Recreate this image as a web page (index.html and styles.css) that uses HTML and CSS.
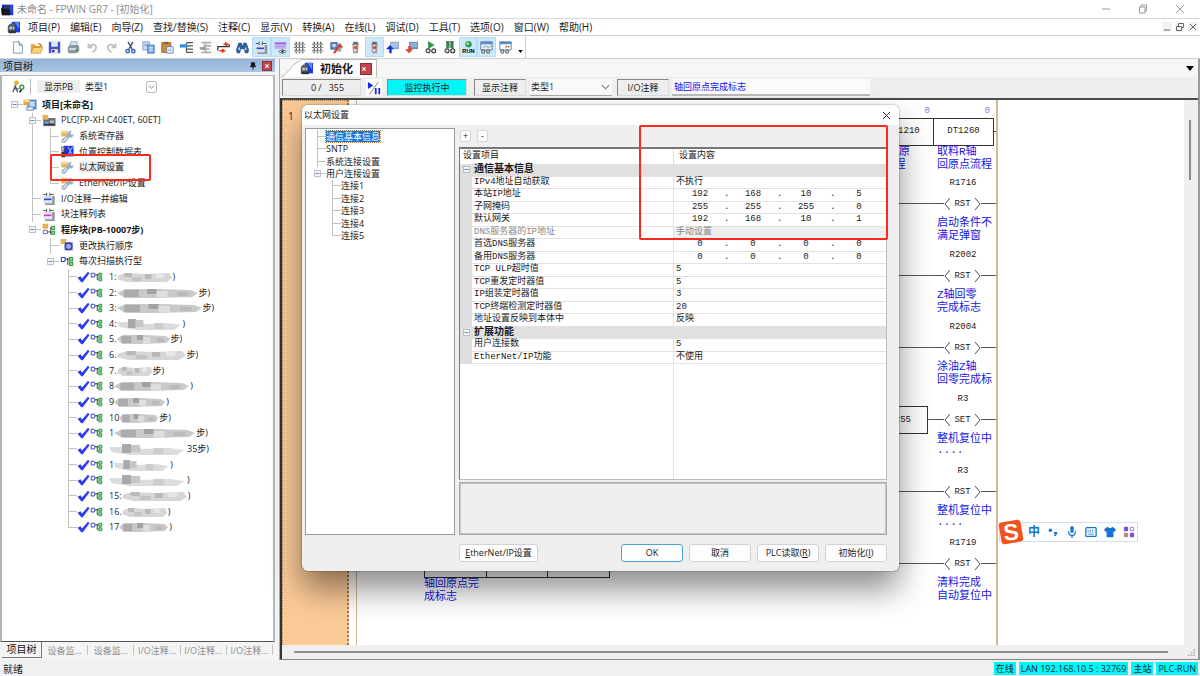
FILE: index.html
```html
<!DOCTYPE html>
<html lang="zh-CN">
<head>
<meta charset="utf-8">
<title>未命名 - FPWIN GR7 - [初始化]</title>
<link rel="stylesheet" href="styles.css">
</head>
<body>
<svg class="defs" aria-hidden="true">
  <symbol id="app" viewBox="0 0 16 16"><path d="M1 2h14v13H1z" fill="#1730e0"/><path d="M0 7l4-3h6l1 11H1z" fill="#15181c"/><path d="M4 4h6v3H3z" fill="#3b4048"/><path d="M11 3l3 1v9l-3-6z" fill="#2b56f5"/></symbol>
  <symbol id="plcdoc" viewBox="0 0 16 16"><path d="M6 1h10v13H6z" fill="#1a35ea"/><path d="M9 1l6 9V1z" fill="#5b86ff"/><path d="M1 6l3-3h6v11H1z" fill="#555b66"/><path d="M3 7h3v3H3zM7 7h2v3H7z" fill="#c9d2dc"/><path d="M2 12h9v3H2z" fill="#30353d"/></symbol>
  <symbol id="new" viewBox="0 0 16 16"><path d="M3 1h7l4 4v10H3z" fill="#fafdff" stroke="#6b8cae"/><path d="M10 1v4h4" fill="#cfe0f2" stroke="#3e6a9a"/></symbol>
  <symbol id="open" viewBox="0 0 16 16"><path d="M1 4h5l1 2h6v8H1z" fill="#e8a33a"/><path d="M4 8h12l-3 7H1z" fill="#fbd27a" stroke="#c27a1c" stroke-width=".7"/><path d="M9 3q4-2 5 2l1-1v3h-3l1-1q-1-2-4-3z" fill="#e07a20"/></symbol>
  <symbol id="save" viewBox="0 0 16 16"><path d="M1 1h14v14H1z" fill="#4453c4"/><path d="M4 1h8v6H4z" fill="#dfe8ff"/><path d="M4 10h8v5H4z" fill="#e8ecf8"/><path d="M5 11h3v3H5z" fill="#2a2f80"/></symbol>
  <symbol id="print" viewBox="0 0 16 16"><path d="M5 1h8l-2 6H3z" fill="#d5e6fa" stroke="#6c8db0" stroke-width=".8"/><path d="M1 7l3-2h10l1 2v5l-3 3H2l-1-2z" fill="#8a96a0"/><path d="M3 9h8v2H3z" fill="#e9eef2"/><path d="M11 10h3v3h-3z" fill="#43a047"/></symbol>
  <symbol id="undo" viewBox="0 0 16 16"><path d="M3 3v5h5M3 8q6-6 9-2 2 4-4 8" fill="none" stroke="#b9bcc0" stroke-width="2"/></symbol>
  <symbol id="redo" viewBox="0 0 16 16"><path d="M13 3v5H8M13 8Q7 2 4 6q-2 4 4 8" fill="none" stroke="#b9bcc0" stroke-width="2"/></symbol>
  <symbol id="cut" viewBox="0 0 16 16"><path d="M5 1l5 9M11 1L6 10" stroke="#4a5a70" stroke-width="1.8"/><circle cx="4.500" cy="12.500" r="2" fill="none" stroke="#2f66b8" stroke-width="1.800"/><circle cx="11.500" cy="12.500" r="2" fill="none" stroke="#2f66b8" stroke-width="1.800"/></symbol>
  <symbol id="copy" viewBox="0 0 16 16"><path d="M1 1h8v10H1z" fill="#cfe2fa" stroke="#6a8fc4"/><path d="M3 4h4M3 6h4" stroke="#6a8fc4"/><path d="M7 5h8v10H7z" fill="#7db0ea" stroke="#3c69a8"/><path d="M9 8h4M9 10h4M9 12h4" stroke="#e6f1ff"/></symbol>
  <symbol id="paste" viewBox="0 0 16 16"><path d="M1 2h11v12H1z" fill="#d08a3a" stroke="#8c5417"/><path d="M4 1h5v3H4z" fill="#6b6b6b"/><path d="M7 7h8v8H7z" fill="#eef4fc" stroke="#5b7ba8"/><path d="M9 10h4M9 12h4" stroke="#8aa4c8"/></symbol>
  <symbol id="insrow" viewBox="0 0 16 16"><path d="M8 2h8M8 6h8M8 10h8M8 14h8M8 2v12" stroke="#555" stroke-width="1.500" fill="none"/><path d="M0 4h7v4H0z" fill="#2d8be0"/><path d="M7 3l3 3-3 3z" fill="#2d8be0"/></symbol>
  <symbol id="delrow" viewBox="0 0 16 16"><path d="M3 2h12M5 6h10M3 10h10M3 14h12M8 2v12" stroke="#b0b0b0" stroke-width="2"/><path d="M1 9h7" stroke="#999" stroke-width="3"/></symbol>
  <symbol id="wire" viewBox="0 0 16 16"><path d="M1 12V7h14V4" fill="none" stroke="#333" stroke-width="1.500"/><path d="M10 1l5 3-5 3zM6 9l5 3-5 3z" fill="#e33b16"/><path d="M8 4h3M3 12h4" stroke="#e33b16" stroke-width="2"/></symbol>
  <symbol id="find" viewBox="0 0 16 16"><path d="M3 2h4l1 4 1-4h4l3 9-1 4h-4l-1-5H6l-1 5H1l-1-4z" fill="#2e5f9c"/><path d="M3 8h2v3H3zM11 8h2v3h-2z" fill="#b8d4f4"/></symbol>
  <symbol id="iocmt" viewBox="0 0 16 16"><path d="M3 5h12v11H3z" fill="#8c949e"/><path d="M1 5h11v9H1z" fill="#dbe2ea"/><path d="M1 3h3M5 1v4M9 1v4M10 3h4" stroke="#555" stroke-width="1.300"/><path d="M2 9h9" stroke="#1c49e8" stroke-width="2"/></symbol>
  <symbol id="blkcmt" viewBox="0 0 16 16"><path d="M3 5h12v11H3z" fill="#8c949e"/><path d="M1 5h11v9H1z" fill="#e6e6ee"/><path d="M1 3h3M5 1v4M9 1v4M10 3h4" stroke="#555" stroke-width="1.300"/><path d="M2 9h9" stroke="#e62bd8" stroke-width="2"/></symbol>
  <symbol id="cmtview" viewBox="0 0 16 16"><path d="M1 1h14v9H1z" fill="#c9b4f4"/><path d="M1 3h14" stroke="#a05be8" stroke-width="2"/><path d="M1 7h14" stroke="#8f9be0"/><path d="M6 13q4-4 9 0-4 4-9 0z" fill="#fff" stroke="#444"/><circle cx="10.500" cy="13" r="1.500" fill="#333"/></symbol>
  <symbol id="grid" viewBox="0 0 16 16"><path d="M1 4h14M1 8h14M1 12h14" stroke="#777" stroke-width="1.500" stroke-dasharray="3 1"/><path d="M4 1v14M8 1v14M12 1v14" stroke="#666" stroke-width="1.800" stroke-dasharray="3 1"/></symbol>
  <symbol id="conv" viewBox="0 0 16 16"><path d="M1 2h8v8H1z" fill="#5f91d8" stroke="#2f4f88"/><path d="M3 4h4v3H3z" fill="#d8e8fb"/><path d="M9 3h5v10H9z" fill="#9aa5b5"/><path d="M5 15L12 5l3 3" stroke="#d83b28" stroke-width="2.500" fill="none"/></symbol>
  <symbol id="plc" viewBox="0 0 16 16"><path d="M4 3h8l-1 12H5z" fill="#9b9b9b"/><path d="M5 1h6v3H5z" fill="#6c6c6c"/><path d="M6 5h3v8H6z" fill="#e2e2e2"/><circle cx="8" cy="8" r="2" fill="#d9452c"/></symbol>
  <symbol id="upload" viewBox="0 0 16 16"><path d="M5 1h11v9H5z" fill="#8fa4bd"/><path d="M6 2h9v6H6z" fill="#a9c4e6"/><path d="M5 5l5 5H7v5H4v-5H0z" fill="#1b31e6"/></symbol>
  <symbol id="download" viewBox="0 0 16 16"><path d="M5 1h11v9H5z" fill="#6f86a0"/><path d="M6 2h9v6H6z" fill="#8fb0d8"/><path d="M5 15l5-5H7V6H4v4H0z" fill="#e2412a"/></symbol>
  <symbol id="monrun" viewBox="0 0 16 16"><path d="M5 0l8 5-8 5z" fill="#2f9a48"/><circle cx="5" cy="12" r="2.500" fill="#ddd" stroke="#333" stroke-width="1.300"/><circle cx="12" cy="12" r="2.500" fill="#ddd" stroke="#333" stroke-width="1.300"/></symbol>
  <symbol id="monstop" viewBox="0 0 16 16"><path d="M4 0h4v9H4zM9 0h4v9H9z" fill="#3b7d4c"/><circle cx="5" cy="12" r="2.500" fill="#ddd" stroke="#333" stroke-width="1.300"/><circle cx="12" cy="12" r="2.500" fill="#ddd" stroke="#333" stroke-width="1.300"/></symbol>
  <symbol id="monwin" viewBox="0 0 16 16"><path d="M1 1h14v10H1z" fill="#e4ecf7" stroke="#4f6f9a"/><path d="M1 1h14v3H1z" fill="#5a88c8"/><path d="M4 8l3-2 3 2 4-2" stroke="#4a7" fill="none"/><circle cx="4" cy="13" r="2" fill="#ddd" stroke="#333"/><circle cx="10" cy="13" r="2" fill="#ddd" stroke="#333"/></symbol>
  <symbol id="monwin2" viewBox="0 0 16 16"><path d="M1 1h14v10H1z" fill="#fff" stroke="#4f6f9a"/><path d="M1 1h14v3H1z" fill="#5a88c8"/><path d="M8 6h2v2H8z" fill="#d43"/><path d="M11 6h2v2h-2z" fill="#3a5"/><circle cx="4" cy="13" r="2" fill="#ddd" stroke="#333"/><circle cx="10" cy="13" r="2" fill="#ddd" stroke="#333"/></symbol>
  <symbol id="tool" viewBox="0 0 16 16"><path d="M1 1h8v7H1z" fill="#e8b254"/><path d="M2 1h6v3H2z" fill="#f7db9d"/><path d="M2 15q-2-2 0-4l7-5q0-5 5-5l-2 3 2 2 2-1q0 5-5 4l-5 6q-2 2-4 0z" fill="#93aecb"/><path d="M3 14l5-5" stroke="#d4e6f6" stroke-width="2"/></symbol>
  <symbol id="pos" viewBox="0 0 16 16"><path d="M4 1h12v13H4z" fill="#1b2be8"/><path d="M9 2l3 5-3 7M15 2l-3 5 3 7" stroke="#8fb4ff" stroke-width="1.500" fill="none"/><path d="M1 8h5v7H1z" fill="#3a3340"/><path d="M1 2h5v5H1z" fill="#55505c"/><path d="M2 3h2v3H2z" fill="#d8d8d8"/></symbol>
  <symbol id="project" viewBox="0 0 16 16"><path d="M5 2h11v12H5z" fill="#4c84c8"/><path d="M7 4h7v7H7z" fill="#b9dcfa"/><path d="M0 2h8v7H0z" fill="#e0a64a"/><path d="M1 2h6v3H1z" fill="#f9dda0"/><path d="M4 11h8v4H4z" fill="#e9f2fb" stroke="#4977ad"/></symbol>
  <symbol id="plcunit" viewBox="0 0 16 16"><path d="M1 5h15v10H1z" fill="#666d78"/><path d="M0 1h7v6H0z" fill="#e8b254"/><path d="M3 9h4v3H3z" fill="#4fa7e8"/><path d="M9 8h5v3H9z" fill="#b8c0ca"/><path d="M2 13h13" stroke="#222"/></symbol>
  <symbol id="blocks" viewBox="0 0 16 16"><path d="M0 1h7v6H0z" fill="#e8b254"/><path d="M1 9h5v4H1z" fill="#fff" stroke="#3b50b8"/><path d="M6 11h4M10 5v9" stroke="#333"/><path d="M11 4h4v4h-4zM11 10h4v4h-4z" fill="#7fd08a" stroke="#2a8a3a"/></symbol>
  <symbol id="order" viewBox="0 0 16 16"><path d="M0 0h7v6H0z" fill="#e8b254"/><path d="M5 4h10v10H5z" fill="#5a69c8"/><circle cx="10" cy="9" r="4" fill="#9aa5ea" stroke="#2e3b98" stroke-width="1.500"/></symbol>
  <symbol id="pb" viewBox="0 0 16 16"><path d="M1 3h4q2 2 0 5H1z" fill="#fff" stroke="#3445c8" stroke-width="1.300"/><path d="M6 5h4M9 4v8" stroke="#333" stroke-width="1.200"/><path d="M11 3h4v4h-4zM11 9h4v4h-4z" fill="#8fd89a" stroke="#2f9a40" stroke-width="1.300"/></symbol>
  <symbol id="check" viewBox="0 0 16 16"><path d="M0 9l4-2 2 3 8-9 2 2L7 15H5z" fill="#2d3df0"/></symbol>
  <symbol id="people" viewBox="0 0 16 16"><path d="M5 0l4 3-3 4-4-3z" fill="#f0b030"/><path d="M1 15l3-8 3 8M3 11h5" fill="none" stroke="#4a5570" stroke-width="1.500"/><circle cx="12" cy="9" r="2.500" fill="none" stroke="#3a9a48" stroke-width="1.800"/><path d="M9 15l3-3" stroke="#26324f" stroke-width="2"/></symbol>
  <symbol id="down" viewBox="0 0 10 10"><path d="M1 3l4 4 4-4" fill="none" stroke="#777" stroke-width="1.200"/></symbol>
  <symbol id="minus" viewBox="0 0 9 9"><path d="M.5.5h8v8h-8z" fill="#f4f6fa" stroke="#a3a9b0"/><path d="M2 4.500h5" stroke="#4a68b8"/></symbol>
  <symbol id="lt" viewBox="0 0 6 14"><path d="M6 1L1 7l5 6" fill="none" stroke="#444"/></symbol>
  <symbol id="gt" viewBox="0 0 6 14"><path d="M0 1l5 6-5 6" fill="none" stroke="#444"/></symbol>
  <symbol id="mosA" viewBox="0 0 60 12" preserveAspectRatio="none"><path d="M2 4l8-2 20 1 26-1 3 5-6 4H10L0 8z" fill="#d6d6d6"/><path d="M8 2h8v4H8zM30 3h7v5h-7z" fill="#b9b9b9"/><path d="M16 6h10v4H16z" fill="#c4c4c4"/><path d="M42 3h8v4h-8z" fill="#e6e6e6"/></symbol>
  <symbol id="mosB" viewBox="0 0 60 12" preserveAspectRatio="none"><path d="M0 6l6-4h24l24 1 5 3-4 4-30 1H6z" fill="#c9c9c9"/><path d="M5 3h11v7H5z" fill="#acacac"/><path d="M22 2h7v5h-7z" fill="#a2a2a2"/><path d="M29 4h8v6h-8z" fill="#dedede"/><path d="M44 5h8v4h-8z" fill="#bababa"/></symbol>
  <symbol id="mosC" viewBox="0 0 60 12" preserveAspectRatio="none"><path d="M0 4h20l6 2 20-1 12 2-6 5H16L2 9z" fill="#dcdcdc"/><path d="M10 1h7v9h-7z" fill="#a9a9a9"/><path d="M17 2h7v7h-7z" fill="#c6c6c6"/><path d="M34 5h8v6h-8z" fill="#cdcdcd"/></symbol>
</svg>

<div class="app">
  <header class="titlebar">
    <svg class="i14"><use href="#app"/></svg>
    <h1>未命名 - FPWIN GR7 - [初始化]</h1>
    <div class="wincontrols">
      <button aria-label="最小化"><svg viewBox="0 0 10 10"><path d="M1 5h8"/></svg></button>
      <button aria-label="还原"><svg viewBox="0 0 10 10"><path d="M1.500 3h5.500v6H1.500zM3 3V1h5.500v6H7" /></svg></button>
      <button aria-label="关闭"><svg viewBox="0 0 10 10"><path d="M1 1l8 8M9 1L1 9"/></svg></button>
    </div>
  </header>

  <nav class="menubar">
    <svg class="i14"><use href="#plcdoc"/></svg>
    <button>项目(P)</button><button>编辑(E)</button><button>向导(Z)</button><button>查找/替换(S)</button><button>注释(C)</button><button>显示(V)</button><button>转换(A)</button><button>在线(L)</button><button>调试(D)</button><button>工具(T)</button><button>选项(O)</button><button>窗口(W)</button><button>帮助(H)</button>
    <div class="mdi">
      <button aria-label="最小化文档"><svg viewBox="0 0 10 10"><path d="M2 8h6"/></svg></button>
      <button aria-label="还原文档"><svg viewBox="0 0 10 10"><path d="M1.500 4.500h5v4h-5zM3.500 4V1.500h5v4H7"/></svg></button>
      <button aria-label="关闭文档"><svg viewBox="0 0 10 10"><path d="M2 2l6 6M8 2L2 8"/></svg></button>
    </div>
  </nav>

  <div class="toolbar">
    <div class="tools">
      <button aria-label="新建"><svg><use href="#new"/></svg></button>
      <button aria-label="打开"><svg><use href="#open"/></svg></button>
      <button aria-label="保存"><svg><use href="#save"/></svg></button>
      <button aria-label="打印"><svg><use href="#print"/></svg></button>
      <button aria-label="撤销"><svg><use href="#undo"/></svg></button>
      <button aria-label="重做"><svg><use href="#redo"/></svg></button>
      <button aria-label="剪切"><svg><use href="#cut"/></svg></button>
      <button aria-label="复制"><svg><use href="#copy"/></svg></button>
      <button aria-label="粘贴"><svg><use href="#paste"/></svg></button>
      <button aria-label="插入行"><svg><use href="#insrow"/></svg></button>
      <button aria-label="删除行"><svg><use href="#delrow"/></svg></button>
      <button aria-label="连线"><svg><use href="#wire"/></svg></button>
      <button aria-label="查找"><svg><use href="#find"/></svg></button>
      <button class="on" aria-label="I/O注释"><svg><use href="#iocmt"/></svg></button>
      <button class="on" aria-label="显示注释"><svg><use href="#cmtview"/></svg></button>
      <button aria-label="网格"><svg><use href="#grid"/></svg></button>
      <button aria-label="网格转换"><svg><use href="#grid"/></svg></button>
      <button aria-label="转换"><svg><use href="#conv"/></svg></button>
      <button aria-label="离线"><svg><use href="#plc"/></svg></button>
      <button class="on" aria-label="在线"><svg><use href="#plc"/></svg></button>
      <button aria-label="读取"><svg><use href="#upload"/></svg></button>
      <button aria-label="下载"><svg><use href="#download"/></svg></button>
      <button aria-label="开始监控"><svg><use href="#monrun"/></svg></button>
      <button aria-label="停止监控"><svg><use href="#monstop"/></svg></button>
      <button class="on" aria-label="运行"><svg viewBox="0 0 16 16"><circle cx="8" cy="4" r="4" fill="#2fa050"/><circle cx="7" cy="3" r="1.500" fill="#b5ebc3"/><text x="8" y="15" text-anchor="middle" font-size="7" font-weight="700" font-family="Liberation Sans">RUN</text></svg></button>
      <button class="on" aria-label="数据监控"><svg><use href="#monwin"/></svg></button>
      <button aria-label="状态监控"><svg><use href="#monwin2"/></svg></button>
    </div>
    <button class="more" aria-label="更多"><svg viewBox="0 0 6 4"><path d="M0 0h6L3 4z"/></svg></button>
  </div>

  <main class="work">
    <aside class="dock">
      <header class="dockhead">
        <h2>项目树</h2>
        <button class="pin" aria-label="固定"><svg viewBox="0 0 10 10"><path d="M3 1h4v4h1v1H2V5h1zM5 6v4" fill="#111" stroke="#111"/></svg></button>
        <button class="redx" aria-label="关闭项目树"><svg viewBox="0 0 10 10"><path d="M3 3l4 4M7 3L3 7" stroke="#fff" stroke-width="1.500"/></svg></button>
      </header>
      <div class="dockbody">
        <div class="filter">
          <svg class="i14"><use href="#people"/></svg>
          <span class="bar"></span>
          <button class="showpb">显示PB</button>
          <label class="pick"><select aria-label="类型"><option>类型1</option></select><svg><use href="#down"/></svg></label>
        </div>
        <ul class="tree">
          <li class="strong"><button class="tog end" aria-label="折叠"><svg><use href="#minus"/></svg></button><svg class="ico"><use href="#project"/></svg><span>项目[未命名]</span></li>
          <li class="l1"><button class="tog thru" aria-label="折叠"><svg><use href="#minus"/></svg></button><svg class="ico"><use href="#plcunit"/></svg><span>PLC[FP-XH C40ET, 60ET]</span></li>
          <li class="l1"><i class="v"></i><i class="t"></i><svg class="ico"><use href="#tool"/></svg><span>系统寄存器</span></li>
          <li class="l1"><i class="v"></i><i class="t"></i><svg class="ico"><use href="#pos"/></svg><span>位置控制数据表</span></li>
          <li class="l1 current"><i class="v"></i><i class="t"></i><svg class="ico"><use href="#tool"/></svg><span>以太网设置</span><b class="mark"></b></li>
          <li class="l1"><i class="v"></i><i class="e"></i><svg class="ico"><use href="#tool"/></svg><span>EtherNet/IP设置</span></li>
          <li class="l1"><i class="t"></i><svg class="ico"><use href="#iocmt"/></svg><span>I/O注释一并编辑</span></li>
          <li class="l1"><i class="t"></i><svg class="ico"><use href="#blkcmt"/></svg><span>块注释列表</span></li>
          <li class="l1 strong"><button class="tog end" aria-label="折叠"><svg><use href="#minus"/></svg></button><svg class="ico"><use href="#blocks"/></svg><span>程序块(PB-10007步)</span></li>
          <li class="l2"><i class="t"></i><svg class="ico"><use href="#order"/></svg><span>更改执行顺序</span></li>
          <li class="l2"><button class="tog end" aria-label="折叠"><svg><use href="#minus"/></svg></button><svg class="ico"><use href="#pb"/></svg><span>每次扫描执行型</span></li>
          <li class="l3"><i class="t"></i><svg class="chk"><use href="#check"/></svg><svg class="pbi"><use href="#pb"/></svg><span>1:</span><svg class="mos" style="width:56px"><use href="#mosA"/></svg><span>)</span></li>
          <li class="l3"><i class="t"></i><svg class="chk"><use href="#check"/></svg><svg class="pbi"><use href="#pb"/></svg><span>2:</span><svg class="mos" style="width:82px"><use href="#mosB"/></svg><span>步)</span></li>
          <li class="l3"><i class="t"></i><svg class="chk"><use href="#check"/></svg><svg class="pbi"><use href="#pb"/></svg><span>3:</span><svg class="mos" style="width:86px"><use href="#mosB"/></svg><span>步)</span></li>
          <li class="l3"><i class="t"></i><svg class="chk"><use href="#check"/></svg><svg class="pbi"><use href="#pb"/></svg><span>4:</span><svg class="mos" style="width:66px"><use href="#mosC"/></svg><span>)</span></li>
          <li class="l3"><i class="t"></i><svg class="chk"><use href="#check"/></svg><svg class="pbi"><use href="#pb"/></svg><span>5.</span><svg class="mos" style="width:54px"><use href="#mosB"/></svg><span>步)</span></li>
          <li class="l3"><i class="t"></i><svg class="chk"><use href="#check"/></svg><svg class="pbi"><use href="#pb"/></svg><span>6.</span><svg class="mos" style="width:70px"><use href="#mosA"/></svg><span>步)</span></li>
          <li class="l3"><i class="t"></i><svg class="chk"><use href="#check"/></svg><svg class="pbi"><use href="#pb"/></svg><span>7.</span><svg class="mos" style="width:36px"><use href="#mosA"/></svg><span>步)</span></li>
          <li class="l3"><i class="t"></i><svg class="chk"><use href="#check"/></svg><svg class="pbi"><use href="#pb"/></svg><span>8</span><svg class="mos" style="width:76px"><use href="#mosB"/></svg><span>)</span></li>
          <li class="l3"><i class="t"></i><svg class="chk"><use href="#check"/></svg><svg class="pbi"><use href="#pb"/></svg><span>9</span><svg class="mos" style="width:52px"><use href="#mosB"/></svg><span>)</span></li>
          <li class="l3"><i class="t"></i><svg class="chk"><use href="#check"/></svg><svg class="pbi"><use href="#pb"/></svg><span>10</span><svg class="mos" style="width:40px"><use href="#mosB"/></svg><span>步)</span></li>
          <li class="l3"><i class="t"></i><svg class="chk"><use href="#check"/></svg><svg class="pbi"><use href="#pb"/></svg><span>1</span><svg class="mos" style="width:82px"><use href="#mosB"/></svg><span>步)</span></li>
          <li class="l3"><i class="t"></i><svg class="chk"><use href="#check"/></svg><svg class="pbi"><use href="#pb"/></svg><svg class="mos" style="width:78px"><use href="#mosC"/></svg><span>35步)</span></li>
          <li class="l3"><i class="t"></i><svg class="chk"><use href="#check"/></svg><svg class="pbi"><use href="#pb"/></svg><span>1</span><svg class="mos" style="width:56px"><use href="#mosC"/></svg><span>)</span></li>
          <li class="l3"><i class="t"></i><svg class="chk"><use href="#check"/></svg><svg class="pbi"><use href="#pb"/></svg><svg class="mos" style="width:78px"><use href="#mosC"/></svg><span>)</span></li>
          <li class="l3"><i class="t"></i><svg class="chk"><use href="#check"/></svg><svg class="pbi"><use href="#pb"/></svg><span>15:</span><svg class="mos" style="width:66px"><use href="#mosA"/></svg><span>)</span></li>
          <li class="l3"><i class="t"></i><svg class="chk"><use href="#check"/></svg><svg class="pbi"><use href="#pb"/></svg><span>16.</span><svg class="mos" style="width:46px"><use href="#mosA"/></svg><span>)</span></li>
          <li class="l3"><i class="e"></i><svg class="chk"><use href="#check"/></svg><svg class="pbi"><use href="#pb"/></svg><span>17</span><svg class="mos" style="width:50px"><use href="#mosB"/></svg><span>)</span></li>
        </ul>
      </div>
      <nav class="docktabs">
        <button class="active">项目树</button><button>设备监...</button><button>设备监...</button><button>I/O注释...</button><button>I/O注释...</button><button>I/O注释...</button>
      </nav>
    </aside>

    <section class="doc">
      <div class="tabstrip">
        <div class="tab">
          <svg class="slant" viewBox="0 0 20 18"><path d="M0 18Q4 17 8 11T20 1V18z" fill="#fff"/><path d="M0 18Q4 17 8 11T20 1" fill="none" stroke="#bbb"/></svg>
          <div class="tabface"><svg class="i14"><use href="#plcdoc"/></svg><span>初始化</span><button class="redx" aria-label="关闭初始化"><svg viewBox="0 0 10 10"><path d="M3 3l4 4M7 3L3 7" stroke="#fff" stroke-width="1.500"/></svg></button></div>
        </div>
        <button class="tablist" aria-label="窗口列表"><svg viewBox="0 0 8 5"><path d="M0 0h8L4 5z"/></svg></button>
      </div>
      <div class="infobar">
        <div class="sunk steps">0 /&nbsp;&nbsp; 355</div>
        <button class="pp" aria-label="监控切换"><svg viewBox="0 0 16 16"><path d="M1 1l6 4-6 4z" fill="#1522e8"/><path d="M3 15L13 1" stroke="#777"/><path d="M9 8h2v7H9zM13 8h2v7h-2z" fill="#1522e8"/></svg></button>
        <div class="sunk run">监控执行中</div>
        <div class="sunk show">显示注释</div>
        <label class="pick wide"><select aria-label="注释类型"><option>类型1</option></select><svg><use href="#down"/></svg></label>
        <label class="sunk io" for="iotext">I/O注释</label>
        <input id="iotext" value="轴回原点完成标志">
      </div>
      <div class="view">
        <div class="gutter">1</div>
        <div class="ladder">
          <div class="func">
            <div class="cell"><span>0</span><b>DT1210</b><p>轴回原<br>&nbsp;流程</p></div>
            <div class="cell"><span>0</span><b>DT1260</b><p>取料R轴<br>回原点流程</p></div>
            <i></i>
          </div>
          <div class="out"><h3>R1716</h3><div class="rung"><i></i><svg><use href="#lt"/></svg><b>RST</b><svg><use href="#gt"/></svg><i class="tail"></i></div><p>启动条件不<br>满足弹窗</p></div>
          <div class="out"><h3>R2002</h3><div class="rung"><i></i><svg><use href="#lt"/></svg><b>RST</b><svg><use href="#gt"/></svg><i class="tail"></i></div><p>Z轴回零<br>完成标志</p></div>
          <div class="out"><h3>R2004</h3><div class="rung"><i></i><svg><use href="#lt"/></svg><b>RST</b><svg><use href="#gt"/></svg><i class="tail"></i></div><p>涂油Z轴<br>回零完成标</p></div>
          <div class="out"><h3>R3</h3><div class="rung"><i></i><em>255</em><i class="lead"></i><svg><use href="#lt"/></svg><b>SET</b><svg><use href="#gt"/></svg><i class="tail"></i></div><p>整机复位中<br>····</p></div>
          <div class="out"><h3>R3</h3><div class="rung"><i></i><svg><use href="#lt"/></svg><b>RST</b><svg><use href="#gt"/></svg><i class="tail"></i></div><p>整机复位中<br>····</p></div>
          <div class="out"><h3>R1719</h3><div class="rung"><i></i><svg><use href="#lt"/></svg><b>RST</b><svg><use href="#gt"/></svg><i class="tail"></i></div><p>清料完成<br>自动复位中</p></div>
          <div class="lower"><div class="boxes"><i></i><i></i><i></i></div><p>轴回原点完<br>成标志</p></div>
        </div>
        <div class="blank"></div>
        <div class="vscroll"><i></i></div>
      </div>
      <div class="hscroll"><i></i><svg viewBox="0 0 8 8"><path d="M6 0h2v2H6zM3 3h2v2H3zM6 3h2v2H6zM0 6h2v2H0zM3 6h2v2H3zM6 6h2v2H6z" fill="#bbb"/></svg></div>

      <div class="ime">
        <svg class="sogou" viewBox="0 0 26 26"><rect x="2" y="2" width="22" height="22" rx="3" fill="#f4511e" transform="rotate(-10 13 13)"/><text x="13" y="21" text-anchor="middle" font-family="Liberation Sans" font-size="23" font-weight="700" fill="#fff" transform="rotate(-6 13 13)">S</text></svg>
        <span>中</span>
        <svg viewBox="0 0 14 14"><circle cx="4" cy="5" r="2"/><path d="M8 7h4q0 4-3 5l-1-1q2-1 1-2H8z"/></svg>
        <svg viewBox="0 0 14 14"><rect x="5" y="0" width="4" height="8" rx="2"/><path d="M3 6q0 5 4 5t4-5M7 11v3" fill="none" stroke="#1273d0" stroke-width="1.500"/></svg>
        <svg viewBox="0 0 14 14"><rect x="1" y="2" width="12" height="10" rx="1" fill="none" stroke="#1273d0" stroke-width="1.500"/><path d="M3 5h8M3 7h8" stroke="#1273d0" stroke-dasharray="1.500 1"/><path d="M4 9.500h6" stroke="#1273d0"/></svg>
        <svg viewBox="0 0 14 14"><path d="M4 1q3 3 6 0l4 3-2 3-1-1v7H3V6L2 7 0 4z"/></svg>
        <svg viewBox="0 0 14 14"><rect x="1" y="1" width="5" height="5" rx="1" fill="#7455d8"/><rect x="8.500" y="1.500" width="4" height="4" rx="1" fill="none" stroke="#7455d8"/><rect x="1" y="8" width="5" height="5" rx="1" fill="#c08a70"/><rect x="8" y="8" width="5" height="5" rx="1" fill="#7455d8"/></svg>
      </div>

      <div class="dialog" role="dialog" aria-labelledby="dlgtitle">
        <header><h2 id="dlgtitle">以太网设置</h2><button aria-label="关闭对话框"><svg viewBox="0 0 10 10"><path d="M1 1l8 8M9 1L1 9" stroke="#222"/></svg></button></header>
        <div class="dlgbody">
          <ul class="pages">
            <li class="sel"><i class="t"></i><span>通信基本信息</span></li>
            <li><i class="t"></i><span>SNTP</span></li>
            <li><i class="t"></i><span>系统连接设置</span></li>
            <li><button class="tog end" aria-label="折叠"><svg><use href="#minus"/></svg></button><span>用户连接设置</span></li>
            <li class="sub"><i class="t"></i><span>连接1</span></li>
            <li class="sub"><i class="t"></i><span>连接2</span></li>
            <li class="sub"><i class="t"></i><span>连接3</span></li>
            <li class="sub"><i class="t"></i><span>连接4</span></li>
            <li class="sub"><i class="e"></i><span>连接5</span></li>
          </ul>
          <div class="settings">
            <div class="pm"><button>+</button><button>-</button></div>
            <div class="gridpane">
              <table>
                <colgroup><col class="c0"><col class="c1"><col></colgroup>
                <thead><tr><th colspan="2">设置项目</th><th class="val">设置内容</th></tr></thead>
                <tbody>
                  <tr class="group"><td><svg><use href="#minus"/></svg></td><td colspan="2">通信基本信息</td></tr>
                  <tr><td></td><td>IPv4地址自动获取</td><td>不执行</td></tr>
                  <tr><td></td><td>本站IP地址</td><td><div class="ip"><span>192</span><i>.</i><span>168</span><i>.</i><span>10</span><i>.</i><span>5</span></div></td></tr>
                  <tr><td></td><td>子网掩码</td><td><div class="ip"><span>255</span><i>.</i><span>255</span><i>.</i><span>255</span><i>.</i><span>0</span></div></td></tr>
                  <tr><td></td><td>默认网关</td><td><div class="ip"><span>192</span><i>.</i><span>168</span><i>.</i><span>10</span><i>.</i><span>1</span></div></td></tr>
                  <tr class="off"><td></td><td>DNS服务器的IP地址</td><td>手动设置</td></tr>
                  <tr><td></td><td>首选DNS服务器</td><td><div class="ip"><span>0</span><i>.</i><span>0</span><i>.</i><span>0</span><i>.</i><span>0</span></div></td></tr>
                  <tr><td></td><td>备用DNS服务器</td><td><div class="ip"><span>0</span><i>.</i><span>0</span><i>.</i><span>0</span><i>.</i><span>0</span></div></td></tr>
                  <tr><td></td><td>TCP ULP超时值</td><td>5</td></tr>
                  <tr><td></td><td>TCP重发定时器值</td><td>5</td></tr>
                  <tr><td></td><td>IP组装定时器值</td><td>3</td></tr>
                  <tr><td></td><td>TCP终端检测定时器值</td><td>20</td></tr>
                  <tr><td></td><td>地址设置反映到本体中</td><td>反映</td></tr>
                  <tr class="group"><td><svg><use href="#minus"/></svg></td><td colspan="2">扩展功能</td></tr>
                  <tr><td></td><td>用户连接数</td><td>5</td></tr>
                  <tr><td></td><td>EtherNet/IP功能</td><td>不使用</td></tr>
                </tbody>
              </table>
            </div>
            <div class="desc"></div>
            <b class="mark"></b>
          </div>
        </div>
        <footer>
          <button class="eth"><u>E</u>therNet/IP设置</button>
          <button class="ok">OK</button>
          <button>取消</button>
          <button>PLC读取(<u>R</u>)</button>
          <button>初始化(<u>I</u>)</button>
        </footer>
      </div>
    </section>
  </main>

  <footer class="status">
    <span>就绪</span>
    <b class="first">在线</b><b>LAN 192.168.10.5 : 32769</b><b>主站</b><b>PLC-RUN</b>
  </footer>
</div>
</body>
</html>
```
FILE: styles.css
```css
* { box-sizing: border-box; margin: 0; padding: 0; }
:root {
  --ui: "Open Sans", "Noto Sans CJK SC", sans-serif;
  --song: "Liberation Mono", "Noto Sans CJK SC", monospace;
  --dots: linear-gradient(#c2c2c2, #c2c2c2);
}
body { font: 9px/12px var(--ui); color: #1a1a1a; background: #f0f0f0; }
ul { list-style: none; }
i, em { font-style: normal; }
button, input, select { font: inherit; color: inherit; border: 0; background: none; }
h1, h2, h3 { font-size: inherit; font-weight: 400; }
svg { display: block; flex: none; }
.defs { position: absolute; width: 0; height: 0; }
.i14 { width: 13px; height: 13px; }
.app { display: flex; flex-direction: column; height: 100vh; overflow: hidden; }

.titlebar { display: flex; align-items: center; height: 18px; padding-left: 1px; background: #fff; color: #8c8c8c; }
.titlebar h1 { margin-left: 3px; font-size: 10px; }
.wincontrols { display: flex; gap: 27px; margin-left: auto; padding-right: 15px; }
.wincontrols svg { width: 10px; height: 10px; fill: none; stroke: #999; }

.menubar { display: flex; align-items: center; height: 18px; padding-left: 7px; background: #fff; border-top: 1px solid #d9d9d9; border-bottom: 1px solid #cfcfcf; }
.menubar > button { margin-left: 10px; white-space: nowrap; font-size: 10px; }
.menubar > svg + button { margin-left: 8px; }
.mdi { display: flex; gap: 3px; margin-left: auto; padding-right: 2px; }
.mdi svg { width: 10px; height: 10px; fill: none; stroke: #666; background: #f3f3f3; }

.toolbar { display: flex; align-items: center; height: 23px; background: #fff; padding-left: 8px; border-bottom: 1px solid #d0d0d0; }
.tools { display: grid; grid-template-columns: repeat(27, 1fr); width: 507px; }
.tools button { display: grid; place-items: center; height: 20px; }
.tools svg { width: 13px; height: 13px; }
.tools .on { background: #cde8fa; outline: 1px solid #b4dcf6; outline-offset: -1px; }
.more { align-self: stretch; width: 11px; display: grid; place-items: center; padding-top: 8px; border-right: 1px solid #d0d0d0; }
.more svg { width: 5px; height: 3px; }

.work { flex: 1; display: grid; grid-template-columns: 275px 1fr; gap: 4px; min-height: 0; background: #f4f4f4; }
.dock { display: flex; flex-direction: column; min-height: 0; }
.dockhead { display: flex; align-items: center; height: 13px; padding: 0 3px; background: linear-gradient(#93b3d8, #abc6e4); }
.dockhead .pin { margin-left: auto; margin-right: 5px; }
.dockhead h2 { font-size: 10px; }
.pin svg { width: 8px; height: 8px; }
.redx { background: #c4444a; border: 1px solid #8f3036; }
.redx svg { width: 8px; height: 8px; }
.dockbody { flex: 1; margin-top: 3px; border: 1px solid #b5b5b5; border-width: 1px 2px; border-bottom-color: #555; background: #fff; min-height: 0; }
.filter { display: flex; align-items: center; height: 21px; padding-left: 10px; }
.filter .bar { width: 1px; height: 15px; margin: 0 6px 0 5px; background: #bbb; }
.showpb { width: 43px; height: 13px; background: #eee; }
.pick { display: flex; align-items: center; margin-left: 4px; width: 73px; }
.pick select { appearance: none; flex: 1; min-width: 0; padding-left: 1px; outline: 0; }
.pick svg { width: 11px; height: 12px; padding: 1px; border: 1px solid #bbb; border-radius: 2px; }

.tree { display: grid; grid-auto-rows: 1fr; height: 438px; padding-left: 3px; }
.tree li { display: flex; align-items: center; position: relative; min-height: 0; white-space: nowrap; }
.tree .l1 { padding-left: 18px; }
.tree .l2 { padding-left: 36px; }
.tree .l3 { padding-left: 54px; }
.tree i, .tog { flex: none; width: 18px; height: 100%; }
.v { background: var(--dots) 50% 0 / 1px 100% no-repeat; }
.t, .thru { background: var(--dots) 50% 0 / 1px 100% no-repeat, var(--dots) 100% 50% / 50% 1px no-repeat; }
.e { background: var(--dots) 50% 0 / 1px 50% no-repeat, var(--dots) 100% 50% / 50% 1px no-repeat; }
.end { background: var(--dots) 100% 50% / 50% 1px no-repeat; }
.tog { display: grid; place-items: center; }
.tog svg { width: 7px; height: 7px; }
.ico { width: 14px; height: 13px; margin-right: 5px; }
.l1 .ico, .l2 .ico { margin-left: 1px; }
.chk { width: 13px; height: 12px; }
.pbi { width: 13px; height: 12px; margin-right: 6px; }
.mos { height: 12px; }
.strong { font-weight: 700; }
.current span { background: #eee; }
.mark { position: absolute; border: 2px solid #fb2a1c; border-radius: 2px; pointer-events: none; }
.current .mark { left: 45px; top: -6px; width: 101px; height: 27px; z-index: 1; }

.docktabs { display: flex; height: 18px; padding: 0 2px 2px; color: #8e8e8e; }
.docktabs button { flex: 1; white-space: nowrap; border-right: 1px solid #c4c4c4; margin: 3px 0; line-height: 11px; }
.docktabs .active { flex: 0 0 40px; margin: 0; color: #111; background: #f5f5f5; border: 1px solid #777; border-width: 0 1px 1px 0; font-size: 10px; }

.doc { position: relative; display: flex; flex-direction: column; min-width: 0; min-height: 0; border-left: 1px solid #aaa; border-right: 2px solid #999; border-bottom: 1px solid #888; background: #efefef; }
.tabstrip { display: flex; height: 18px; background: #f6f6f6; padding-left: 1px; }
.tab { display: flex; }
.slant { width: 20px; height: 18px; }
.tabface { display: flex; align-items: center; gap: 5px; width: 76px; background: #fff; border: 1px solid #bbb; border-width: 1px 1px 0 0; font-weight: 700; }
.tabface svg { margin-left: -1px; }
.tabface span { margin-left: 2px; font-size: 11px; }
.tabface .redx { width: 12px; height: 12px; margin-left: 2px; }
.tablist { margin-left: auto; padding-right: 4px; }
.tablist svg { width: 8px; height: 5px; }
.infobar { display: flex; height: 21px; padding: 2px 0 2px 2px; }
.sunk { border: 1px solid #ddd; border-left-color: #888; border-top-color: #888; text-align: center; line-height: 16px; white-space: nowrap; }
.steps { width: 79px; padding-left: 12px; }
.pp { width: 16px; margin: 0 5px; background: #fff; }
.pp svg { width: 14px; height: 14px; margin: auto; }
.run { width: 80px; background: #00f6f6; }
.show { width: 52px; margin-left: 7px; }
.wide { width: 82px; background: #fafafa; border-bottom: 1px solid #aaa; }
.wide svg { border: 0; margin-right: 1px; }
.io { width: 52px; margin-left: 5px; }
.infobar input { width: 198px; min-width: 0; margin-left: 3px; padding-left: 2px; color: #1010f0; background: #fbfbfb; border-bottom: 2px solid #bbb; }

.view { flex: 1; min-height: 0; display: grid; grid-template-columns: 67px 1fr 186px 14px; border-top: 2px solid #4a4a4a; border-left: 2px solid #333; background: #fff; overflow: hidden; }
.gutter { padding: 8px 0 0 5px; background: #fcca97; border: 1px dotted #9a7a52; border-width: 1px 2px 0 1px; font: 10px/14px var(--ui); }
.ladder { position: relative; margin-left: 7px; border: solid #d5b692; border-width: 0 2px 0 1px; font: 9px/14px var(--song); color: #222; }
.ladder p { font-size: 11px; line-height: 13px; color: #1616e6; white-space: nowrap; }
.ladder b { font-weight: 400; }
.func { display: flex; justify-content: flex-end; height: 76px; padding-top: 4px; }
.cell { width: 60px; }
.cell span { display: block; height: 14px; padding-right: 3px; text-align: right; color: #7b7bf0; }
.cell b { display: block; height: 28px; line-height: 25px; text-align: center; border: 1px solid #333; margin-right: -1px; }
.cell p { padding-left: 4px; }
.func > i { width: 3px; height: 1px; margin-top: 27px; background: #444; }
.out { height: 72px; }
.out h3 { width: 66px; margin-left: auto; text-align: center; }
.out p { width: 59px; margin-left: auto; }
.rung { display: flex; align-items: center; height: 27px; }
.rung i { flex: 1; height: 1px; background: #555; }
.rung .tail { flex: 0 0 15px; }
.rung .lead { flex: 0 0 16px; }
.rung svg { width: 6px; height: 14px; }
.rung b { width: 25px; text-align: center; }
.rung em { width: 56px; height: 28px; padding-right: 16px; text-align: right; line-height: 26px; border: 1px solid #333; }
.lower { position: absolute; left: 67px; top: 450px; }
.boxes { display: grid; grid-template-columns: repeat(3, 1fr); width: 186px; height: 28px; border: 1px solid #333; border-left: 0; }
.boxes i { border-left: 1px solid #333; }
.vscroll { background: #efefef; padding: 20px 0 0 5px; }
.vscroll i { display: block; width: 2px; height: 60px; background: #8a8a8a; }
.hscroll { display: flex; align-items: center; height: 14px; border-left: 2px solid #333; padding: 0 3px 0 12px; }
.hscroll i { flex: 1; height: 2px; margin-right: 20px; background: #8f8f8f; }
.hscroll svg { width: 7px; height: 7px; }

.ime { position: absolute; right: 60px; top: 463px; display: flex; align-items: center; gap: 7px; height: 20px; padding-right: 2px; background: #fff; border: 1px solid #cfdfee; color: #1273d0; }
.ime svg { width: 12px; height: 12px; fill: #1273d0; }
.ime .sogou { width: 26px; height: 26px; margin: 0 -3px 0 -2px; }
.ime span { font-size: 12px; font-weight: 700; }

.dialog { position: absolute; inset: 46px 299px 88px 22px; display: flex; flex-direction: column; background: #efefef; border-radius: 6px; box-shadow: 0 18px 32px rgba(0, 0, 0, .45), 0 0 2px rgba(0, 0, 0, .5); }
.dialog header { display: flex; align-items: center; justify-content: space-between; height: 20px; padding: 0 8px 0 2px; background: #fff; border-radius: 6px 6px 0 0; }
.dialog header svg { width: 9px; height: 9px; }
.dlgbody { flex: 1; min-height: 0; display: grid; grid-template-columns: 150px 1fr; gap: 4px; padding: 3px 12px 0 3px; }
.pages { display: grid; grid-auto-rows: 1fr; background: #fff; border: 1px solid #9a9a9a; padding: 1px 0 292px 3px; }
.pages li { display: flex; align-items: center; min-height: 0; }
.pages i, .pages .tog { flex: none; width: 17px; height: 100%; }
.pages .sub { padding-left: 15px; }
.pages .sel span { background: #1978d4; color: #fff; outline: 1px dotted #d07c30; }
.pages span { line-height: 11px; }
.settings { position: relative; display: flex; flex-direction: column; min-width: 0; }
.pm { display: flex; gap: 6px; height: 19px; padding: 2px 0 0 1px; }
.pm button { width: 11px; height: 12px; line-height: 10px; background: #fff; border: 1px solid #d4d4d4; border-radius: 2px; }
.gridpane { flex: 1; border: 1px solid #bbb; border-top: 2px solid #777; border-left-color: #777; background: linear-gradient(#e4e4e4, #e4e4e4) 213px 0 / 1px 100% no-repeat #fff; font-family: var(--song); }
table { width: 100%; height: 215px; table-layout: fixed; border-spacing: 0; font-size: 9px; line-height: 11px; }
.c0 { width: 12px; }
.c1 { width: 201px; }
th { height: 15px; text-align: left; font-weight: 400; padding-left: 3px; }
th.val { padding-left: 5px; border-left: 1px solid #ddd; }
td { border-bottom: 1px solid #e2e2e2; white-space: nowrap; padding-left: 2px; }
td:first-child { background: #dedede; padding-left: 3px; border-color: #dedede; }
td:nth-child(3) { border-left: 1px solid #e2e2e2; padding-left: 2px; }
.group td { background: #e0e0e0; font-weight: 700; font-size: 10px; }
td svg { width: 7px; height: 7px; }
.off { color: #888; }
.off td:nth-child(3) { background: #efefef; }
.ip { display: grid; grid-template-columns: repeat(3, 48px 5px) 48px; text-align: center; }
.desc { height: 53px; margin-top: 2px; border: 2px solid #c4c4c4; outline: 1px solid #aaa; outline-offset: -1px; }
.settings .mark { left: 180px; right: -1px; top: -3px; height: 115px; }
.dialog footer { display: flex; gap: 6px; height: 36px; padding: 9px 12px 0 157px; }
.dialog footer button { width: 62px; height: 18px; line-height: 14px; background: #fdfdfd; border: 1px solid #d2d2d2; border-radius: 3px; white-space: nowrap; }
.dialog footer .eth { width: 79px; margin-right: auto; }
.dialog footer .ok { border-color: #4ba0e0; }

.status { display: flex; align-items: center; gap: 3px; height: 16px; padding: 1px 2px 0 3px; }
.status b { height: 13px; padding: 0 2px; line-height: 13px; font-weight: 400; background: #00f6f6; color: #0a2a3a; white-space: nowrap; }
.status span { font-size: 10px; }
.status .first { margin-left: auto; }
```
